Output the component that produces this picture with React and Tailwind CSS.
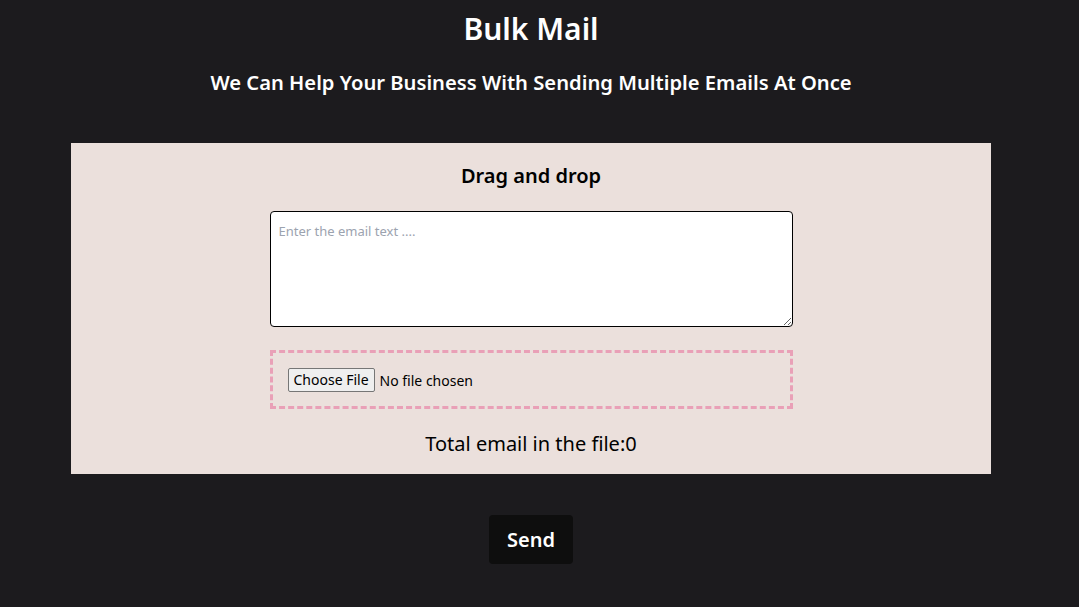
import React, { useState } from 'react';

const App = () => {
  const [text, setText] = useState('');
  const [total, setTotal] = useState(0);

  return (
    <div className="min-h-[607px] bg-[#1c1b1e] font-['Noto_Sans',sans-serif]">
      <div className="w-[1062px] flex flex-col items-center">
        {/* Header */}
        <h1 className="mt-[11px] h-[36px] text-[30px] leading-[36px] font-semibold text-white">
          Bulk Mail
        </h1>
        <h2 className="mt-[21px] h-[28px] text-[20.2px] leading-[28px] font-semibold text-white">
          We Can Help Your Business With Sending Multiple Emails At Once
        </h2>

        {/* Upload Panel */}
        <div className="mt-[47px] w-[920px] h-[331px] bg-[#ebe0dc] flex flex-col items-center">
          <p className="mt-[20px] h-[26px] text-[20px] leading-[26px] font-semibold text-black">
            Drag and drop
          </p>
          <textarea
            value={text}
            onChange={(e) => setText(e.target.value)}
            placeholder="Enter the email text ...."
            className="mt-[22px] w-[523px] h-[116px] bg-white border border-black rounded-[4px] px-[8px] py-[10px] text-[13px] leading-[18px] text-black placeholder:text-[#9ca3af]"
          />
          <div className="mt-[23px] w-[523px] h-[59px] border-[3px] border-dashed border-[#e9a0b7] flex items-center pl-[15px]">
            <input
              type="file"
              onChange={() => setTotal(0)}
              className="text-[14px] text-black file:mr-[5px] file:h-[24px] file:px-[5px] file:border file:border-[#767676] file:bg-[#efefef] file:rounded-[2px] file:text-[14px]"
            />
          </div>
          <p className="mt-[21px] h-[28px] text-[20px] leading-[28px] text-black">
            Total email in the file:{total}
          </p>
        </div>

        <button className="mt-[41px] w-[84px] h-[49px] bg-[#0e0e0e] rounded-[4px] text-white text-[20px] font-semibold">
          Send
        </button>
      </div>
    </div>
  );
};

export default App;
